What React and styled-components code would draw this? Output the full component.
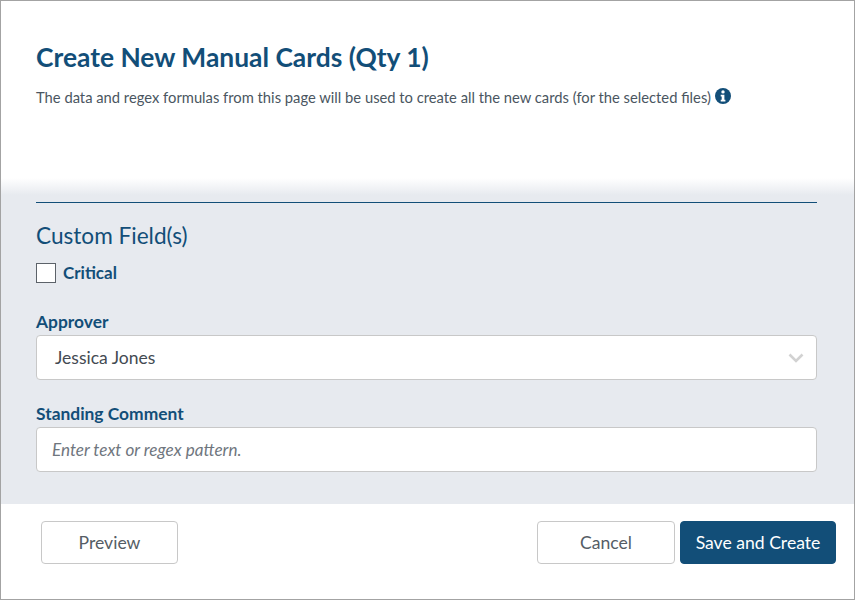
import React from "react";
import styled, { createGlobalStyle } from "styled-components";

const GlobalStyle = createGlobalStyle`
  html, body {
    margin: 0;
    padding: 0;
    background: #fff;
  }
  * {
    box-sizing: border-box;
  }
`;

const App = () => {
  return (
    <Frame>
      <GlobalStyle />
      <Header>
        <Title>Create New Manual Cards (Qty 1)</Title>
        <Subtitle>
          The data and regex formulas from this page will be used to create all the new cards (for the selected files)
          <InfoIcon viewBox="0 0 16 16">
            <circle cx="8" cy="8" r="8" fill="#124e78" />
            <circle cx="8" cy="3.9" r="1.7" fill="#fff" />
            <path d="M5.7 6.7h3.7v5.1h1v1.7H5.7v-1.7h1V8.4h-1z" fill="#fff" />
          </InfoIcon>
        </Subtitle>
      </Header>
      <Body>
        <Divider />
        <SectionTitle>Custom Field(s)</SectionTitle>
        <CheckRow>
          <CheckBox />
          <CheckLabel>Critical</CheckLabel>
        </CheckRow>
        <Field>
          <FieldLabel>Approver</FieldLabel>
          <Select>
            <SelectValue>Jessica Jones</SelectValue>
            <svg width="16" height="10" viewBox="0 0 16 10" fill="none">
              <path d="M1.5 1.5 8 8l6.5-6.5" stroke="#d2d2d2" strokeWidth="2.6" />
            </svg>
          </Select>
        </Field>
        <Field>
          <FieldLabel>Standing Comment</FieldLabel>
          <TextInput placeholder="Enter text or regex pattern." />
        </Field>
      </Body>
      <Footer>
        <Button $width={137}>Preview</Button>
        <FooterRight>
          <Button $width={138}>Cancel</Button>
          <Button $width={156} $primary>
            Save and Create
          </Button>
        </FooterRight>
      </Footer>
    </Frame>
  );
};

export default App;

const Frame = styled.div`
  width: 855px;
  height: 600px;
  border: 1px solid #a3a3a3;
  display: flex;
  flex-direction: column;
  font-family: Lato, "Liberation Sans", sans-serif;
  overflow: hidden;
`;

const Header = styled.div`
  height: 177px;
  padding: 38px 35px 0;
  background: #fff;
  flex-shrink: 0;
`;

const Title = styled.h1`
  margin: 0;
  font-size: 26.4px;
  line-height: 36px;
  font-weight: 700;
  color: #124e78;
`;

const Subtitle = styled.p`
  margin: 12px 0 0;
  font-size: 14.75px;
  line-height: 20px;
  color: #4a5661;
`;

const InfoIcon = styled.svg`
  width: 16px;
  height: 16px;
  margin-left: 4px;
  vertical-align: -1px;
`;

const Body = styled.div`
  flex: 1;
  padding: 24px 37px 0 35px;
  background: linear-gradient(#fff 0, #e7eaef 17px);
`;

const Divider = styled.div`
  height: 1px;
  background: #124e78;
`;

const SectionTitle = styled.h2`
  margin: 18px 0 0;
  font-size: 22.6px;
  line-height: 30px;
  font-weight: 400;
  color: #124e78;
`;

const CheckRow = styled.div`
  display: flex;
  align-items: center;
  gap: 7px;
  margin-top: 12px;
`;

const CheckBox = styled.span`
  width: 20px;
  height: 20px;
  background: #fff;
  border: 1px solid #5c6269;
`;

const CheckLabel = styled.span`
  font-size: 17px;
  line-height: 20px;
  font-weight: 700;
  color: #124e78;
`;

const Field = styled.div`
  margin-top: 29px;

  & + & {
    margin-top: 24px;
  }
`;

const FieldLabel = styled.div`
  font-size: 17.4px;
  line-height: 20px;
  font-weight: 700;
  color: #124e78;
  margin-bottom: 3px;
`;

const Select = styled.div`
  height: 45px;
  display: flex;
  align-items: center;
  justify-content: space-between;
  padding: 0 12px 0 18px;
  background: #fff;
  border: 1px solid #c8c8c8;
  border-radius: 4px;
`;

const SelectValue = styled.span`
  font-size: 17.5px;
  color: #434a52;
`;

const TextInput = styled.input`
  display: block;
  width: 100%;
  height: 45px;
  padding: 0 15px;
  background: #fff;
  border: 1px solid #c8c8c8;
  border-radius: 4px;
  outline: none;
  font-family: inherit;
  font-size: 17.1px;

  &::placeholder {
    font-style: italic;
    color: #6f767e;
    opacity: 1;
  }
`;

const Footer = styled.div`
  height: 95px;
  flex-shrink: 0;
  display: flex;
  align-items: flex-start;
  justify-content: space-between;
  padding: 17px 18px 0 40px;
  background: #fff;
`;

const FooterRight = styled.div`
  display: flex;
  gap: 5px;
`;

const Button = styled.button`
  width: ${(props) => props.$width}px;
  height: 43px;
  padding: 0;
  border: 1px solid ${(props) => (props.$primary ? "#124e78" : "#c8c8c8")};
  border-radius: 4px;
  background: ${(props) => (props.$primary ? "#124e78" : "#fff")};
  color: ${(props) => (props.$primary ? "#fff" : "#555d65")};
  font-family: inherit;
  font-size: 17.6px;
`;
